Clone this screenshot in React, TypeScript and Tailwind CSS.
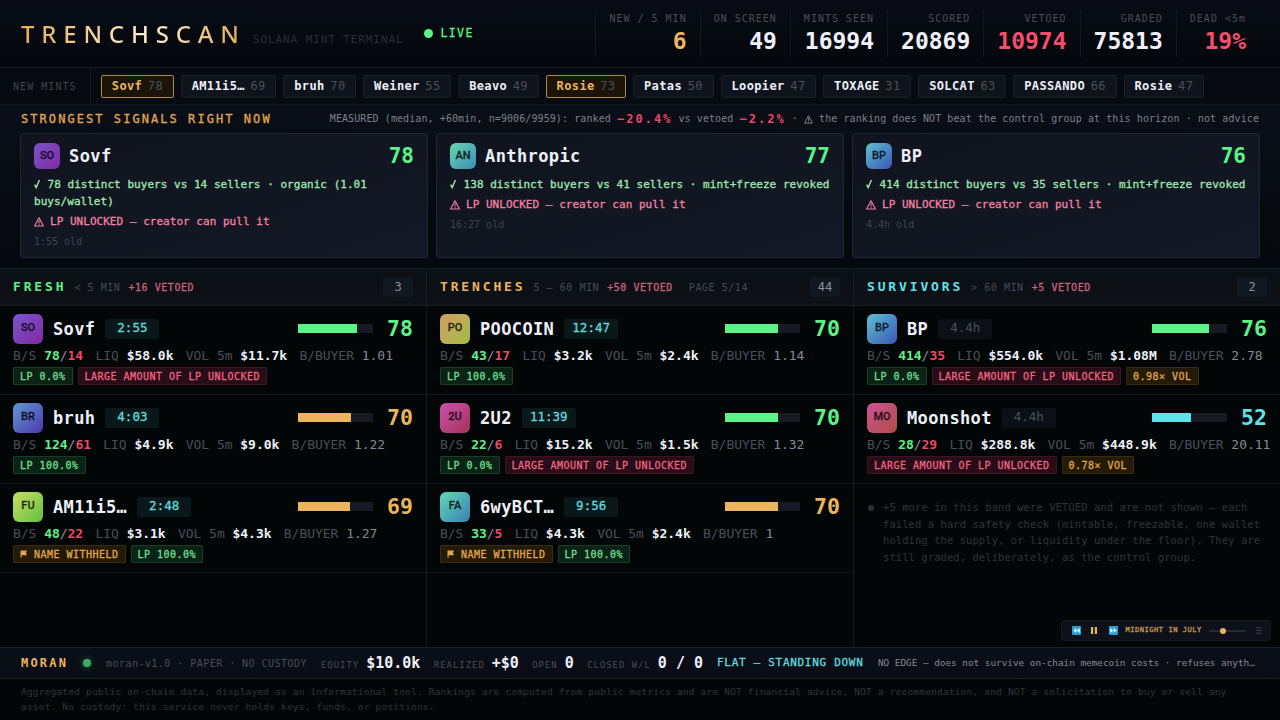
import React from "react";

type Tone = "green" | "gold" | "cyan" | "red";

const textTone: Record<Tone, string> = {
  green: "text-[#5cf287]",
  gold: "text-[#ecb45c]",
  cyan: "text-[#5fe3ea]",
  red: "text-[#f74d6c]",
};

const fillTone: Record<Tone, string> = {
  green: "bg-[#5cf287]",
  gold: "bg-[#ecb45c]",
  cyan: "bg-[#5fe3ea]",
  red: "bg-[#f74d6c]",
};

const tagTone: Record<Tone, string> = {
  green: "bg-[#0b2316] border-[#1a3d26] text-[#6ddf8e]",
  gold: "bg-[#241a08] border-[#3a2c0f] text-[#e0a64a]",
  red: "bg-[#270d17] border-[#3d1420] text-[#ee6480]",
  cyan: "bg-[#0c1a1c] border-[#17383c] text-[#5fe3ea]",
};

const medium = "[-webkit-text-stroke:0.3px_currentColor]";

const stats: { label: string; value: string; color: string }[] = [
  { label: "NEW / 5 MIN", value: "6", color: "text-[#ecb45c]" },
  { label: "ON SCREEN", value: "49", color: "text-[#eef0fa]" },
  { label: "MINTS SEEN", value: "16994", color: "text-[#eef0fa]" },
  { label: "SCORED", value: "20869", color: "text-[#eef0fa]" },
  { label: "VETOED", value: "10974", color: "text-[#f74d6c]" },
  { label: "GRADED", value: "75813", color: "text-[#eef0fa]" },
  { label: "DEAD <5m", value: "19%", color: "text-[#f74d6c]" },
];

const chips: { name: string; score: number; hot?: boolean }[] = [
  { name: "Sovf", score: 78, hot: true },
  { name: "AM11i5…", score: 69 },
  { name: "bruh", score: 70 },
  { name: "Weiner", score: 55 },
  { name: "Beavo", score: 49 },
  { name: "Rosie", score: 73, hot: true },
  { name: "Patas", score: 50 },
  { name: "Loopier", score: 47 },
  { name: "TOXAGE", score: 31 },
  { name: "SOLCAT", score: 63 },
  { name: "PASSANDO", score: 66 },
  { name: "Rosie", score: 47 },
];

const signals = [
  { code: "SO", name: "Sovf", score: 78, grad: "from-[#7a54cf] to-[#7d27a0]", good: "78 distinct buyers vs 14 sellers · organic (1.01 buys/wallet)", age: "1:55 old" },
  { code: "AN", name: "Anthropic", score: 77, grad: "from-[#66d9ad] to-[#3f8bb5]", good: "138 distinct buyers vs 41 sellers · mint+freeze revoked", age: "16:27 old" },
  { code: "BP", name: "BP", score: 76, grad: "from-[#62bfd0] to-[#3b56b4]", good: "414 distinct buyers vs 35 sellers · mint+freeze revoked", age: "4.4h old" },
];

type Tag = { text: string; tone: Tone; flag?: boolean };
type Mint = {
  code: string;
  name: string;
  grad: string;
  age: string;
  old?: boolean;
  score: number;
  tone: Tone;
  buys: string;
  sells: string;
  liq: string;
  vol: string;
  per: string;
  tags: Tag[];
};

const unlocked: Tag = { text: "LARGE AMOUNT OF LP UNLOCKED", tone: "red" };
const lp0: Tag = { text: "LP 0.0%", tone: "green" };
const lp100: Tag = { text: "LP 100.0%", tone: "green" };
const withheld: Tag = { text: "NAME WITHHELD", tone: "gold", flag: true };

const columns: { title: string; color: string; range: string; vetoed: string; page?: string; count: number; mints: Mint[] }[] = [
  {
    title: "FRESH",
    color: "text-[#5cf287]",
    range: "< 5 MIN",
    vetoed: "+16 VETOED",
    count: 3,
    mints: [
      { code: "SO", name: "Sovf", grad: "from-[#7a54cf] to-[#7d27a0]", age: "2:55", score: 78, tone: "green", buys: "78", sells: "14", liq: "$58.0k", vol: "$11.7k", per: "1.01", tags: [lp0, unlocked] },
      { code: "BR", name: "bruh", grad: "from-[#5f97d2] to-[#4a36ab]", age: "4:03", score: 70, tone: "gold", buys: "124", sells: "61", liq: "$4.9k", vol: "$9.0k", per: "1.22", tags: [lp100] },
      { code: "FU", name: "AM11i5…", grad: "from-[#c6df62] to-[#5fbf41]", age: "2:48", score: 69, tone: "gold", buys: "48", sells: "22", liq: "$3.1k", vol: "$4.3k", per: "1.27", tags: [withheld, lp100] },
    ],
  },
  {
    title: "TRENCHES",
    color: "text-[#ecb45c]",
    range: "5 – 60 MIN",
    vetoed: "+50 VETOED",
    page: "PAGE 5/14",
    count: 44,
    mints: [
      { code: "PO", name: "POOCOIN", grad: "from-[#d29c66] to-[#a2bc40]", age: "12:47", score: 70, tone: "green", buys: "43", sells: "17", liq: "$3.2k", vol: "$2.4k", per: "1.14", tags: [lp100] },
      { code: "2U", name: "2U2", grad: "from-[#cc4fae] to-[#a5325a]", age: "11:39", score: 70, tone: "green", buys: "22", sells: "6", liq: "$15.2k", vol: "$1.5k", per: "1.32", tags: [lp0, unlocked] },
      { code: "FA", name: "6wyBCT…", grad: "from-[#63d9b3] to-[#3b80b0]", age: "9:56", score: 70, tone: "gold", buys: "33", sells: "5", liq: "$4.3k", vol: "$2.4k", per: "1", tags: [withheld, lp100] },
    ],
  },
  {
    title: "SURVIVORS",
    color: "text-[#5fe3ea]",
    range: "> 60 MIN",
    vetoed: "+5 VETOED",
    count: 2,
    mints: [
      { code: "BP", name: "BP", grad: "from-[#62bfd0] to-[#3b56b4]", age: "4.4h", old: true, score: 76, tone: "green", buys: "414", sells: "35", liq: "$554.0k", vol: "$1.08M", per: "2.78", tags: [lp0, unlocked, { text: "0.98× VOL", tone: "gold" }] },
      { code: "MO", name: "Moonshot", grad: "from-[#cd5297] to-[#b14c43]", age: "4.4h", old: true, score: 52, tone: "cyan", buys: "28", sells: "29", liq: "$288.8k", vol: "$448.9k", per: "20.11", tags: [unlocked, { text: "0.78× VOL", tone: "gold" }] },
    ],
  },
];

function WarnIcon({ className }: { className: string }) {
  return (
    <svg viewBox="0 0 10 10" className={className} fill="none" stroke="currentColor" strokeWidth="1.1" strokeLinejoin="round">
      <path d="M5 0.8 L9.4 9 H0.6 Z" />
      <path d="M5 3.2 V6.4 M5 7.2 V8.2" />
    </svg>
  );
}

function CheckIcon() {
  return (
    <svg viewBox="0 0 7 10" className="mr-[6.6px] inline-block h-[10px] w-[7px] align-[-1px]" fill="none" stroke="currentColor" strokeWidth="1.4">
      <path d="M0.6 5.6 L2.2 8.6 L5.4 1" />
    </svg>
  );
}

function Avatar({ code, grad, size }: { code: string; grad: string; size: string }) {
  return (
    <div className={`flex shrink-0 items-center justify-center rounded-[6px] bg-linear-to-br text-[11px] font-medium text-black/75 ${grad} ${size}`}>
      <span className={`font-['Roboto',sans-serif] ${medium}`}>{code}</span>
    </div>
  );
}

function Header() {
  return (
    <header className="flex h-[68px] shrink-0 items-start border-b border-[#14181f] bg-linear-to-b from-[#090c16] to-[#04070b] pl-[21px] pr-[21px]">
      <h1 className="mt-[17px] w-[232px] bg-linear-to-r from-[#e5ab52] via-[#fbf0cf] via-55% to-[#e0a34a] bg-clip-text font-['Noto_Sans',sans-serif] text-[24px] leading-[34px] font-medium tracking-[6.8px] whitespace-nowrap text-transparent">
        TRENCHSCAN
      </h1>
      <span className="mt-[32px] text-[11px] leading-[16px] tracking-[0.9px] whitespace-nowrap text-[#292d35]">SOLANA MINT TERMINAL</span>
      <div className={`mt-[25px] ml-[21px] flex items-center gap-[7px] text-[11.5px] leading-[17px] tracking-[1.4px] text-[#5cf287] ${medium}`}>
        <i className="h-[9px] w-[9px] rounded-full bg-[#5cf287]" />
        LIVE
      </div>
      <div className="mt-[10px] ml-auto flex h-[47px]">
        {stats.map((s) => (
          <div key={s.label} className="flex flex-col items-end border-l border-[#12161d] px-[13px] whitespace-nowrap">
            <span className="mt-[1px] text-[10px] leading-[16px] tracking-[1px] text-[#4a4e59]">{s.label}</span>
            <span className={`text-[23px] leading-[28px] font-bold ${s.color}`}>{s.value}</span>
          </div>
        ))}
      </div>
    </header>
  );
}

function Ticker() {
  return (
    <div className="flex h-[37px] shrink-0 border-b border-[#14181f] bg-[#070a11]">
      <div className="flex w-[91px] items-center border-r border-[#151a21] pl-[13px] text-[10px] tracking-[1.05px] text-[#3f434d]">NEW MINTS</div>
      <div className="flex items-center gap-[7px] pl-[10px]">
        {chips.map((c, i) => (
          <div
            key={i}
            className={`flex h-[23px] items-center gap-[5.6px] rounded-[2px] border px-[9.8px] text-[12px] tracking-[0.38px] ${
              c.hot ? "border-[#b08a3e] bg-[#1a1508]" : "border-[#191f27] bg-[#0f141c]"
            }`}
          >
            <span className={`font-bold ${c.hot ? "text-[#ecb45c]" : "text-[#eef0fa]"}`}>{c.name}</span>
            <span className="text-[#4a4e59]">{c.score}</span>
          </div>
        ))}
      </div>
    </div>
  );
}

function Signals() {
  return (
    <section className="flex h-[163px] shrink-0 flex-col bg-linear-to-b from-[#0a0e17] to-[#05080c] px-[20px]">
      <div className="flex h-[28px] items-center pr-[1px] pl-[1px] whitespace-nowrap">
        <h2 className={`text-[12px] leading-[16px] tracking-[2.06px] text-[#e0a64e] ${medium}`}>STRONGEST SIGNALS RIGHT NOW</h2>
        <p className="ml-auto flex items-center text-[10px] leading-[16px] tracking-[0.09px] text-[#7d808b]">
          <span className="whitespace-pre">MEASURED (median, +60min, n=9006/9959): ranked </span>
          <b className="text-[12px] tracking-[2px] text-[#ea4867]">−20.4%</b>
          <span className="whitespace-pre">{" vs vetoed "}</span>
          <b className="text-[12px] tracking-[2px] text-[#ea4867]">−2.2%</b>
          <span className="whitespace-pre">{" · "}</span>
          <WarnIcon className="mr-[6px] h-[9px] w-[9px]" />
          <span>the ranking does NOT beat the control group at this horizon · not advice</span>
        </p>
      </div>
      <div className="grid grid-cols-3 gap-[8px]">
        {signals.map((s) => (
          <article key={s.name} className="flex h-[125px] flex-col rounded-[3px] border border-[#212530] bg-linear-to-br from-[#11141f] to-[#131824] px-[13px] pt-[9px]">
            <div className="flex h-[26px] items-center">
              <Avatar code={s.code} grad={s.grad} size="h-[26px] w-[26px]" />
              <span className="ml-[9px] text-[17px] leading-[24px] font-bold tracking-[0.4px] text-[#eef0fa]">{s.name}</span>
              <span className="ml-auto text-[21px] leading-[24px] font-bold text-[#5cf287]">{s.score}</span>
            </div>
            <p className={`mt-[7px] text-[11px] leading-[17px] tracking-[0.03px] text-[#9de9ad] ${medium}`}>
              <CheckIcon />
              {s.good}
            </p>
            <p className={`mt-[3px] flex items-center text-[11px] leading-[17px] tracking-[0.03px] text-[#f080a4] ${medium}`}>
              <WarnIcon className="mr-[6px] h-[10px] w-[10px]" />
              LP UNLOCKED — creator can pull it
            </p>
            <p className="mt-[4px] text-[10px] leading-[15px] text-[#3f434e]">{s.age}</p>
          </article>
        ))}
      </div>
    </section>
  );
}

function MintRow({ m }: { m: Mint }) {
  return (
    <div className="h-[89px] border-b border-[#11161a] px-[13px] pt-[8px]">
      <div className="flex h-[29px] items-center">
        <Avatar code={m.code} grad={m.grad} size="h-[30px] w-[30px]" />
        <span className="ml-[10px] text-[17px] leading-[24px] font-bold tracking-[0.36px] text-[#eef0fa]">{m.name}</span>
        <span
          className={`ml-[10px] flex h-[20px] w-[54px] items-center justify-center rounded-[2px] text-[12.5px] ${
            m.old ? "bg-[#0c1016] text-[#4a4e59]" : `bg-[#0b1819] text-[#5fd9df] ${medium}`
          }`}
        >
          {m.age}
        </span>
        <div className="ml-auto h-[9px] w-[75px] bg-[#171a25]">
          <div className={`h-full ${fillTone[m.tone]}`} style={{ width: `${m.score}%` }} />
        </div>
        <span className={`ml-[14px] text-[21.5px] leading-[24px] font-bold ${textTone[m.tone]}`}>{m.score}</span>
      </div>
      <div className="mt-[4px] flex gap-[12.3px] text-[13px] leading-[18px] tracking-[-0.03px] whitespace-nowrap text-[#4a4e59]">
        <span>
          B/S <b className="text-[#5cf287]">{m.buys}</b>
          <span className="text-[#8d909b]">/</span>
          <b className="text-[#ea4867]">{m.sells}</b>
        </span>
        <span>
          LIQ <b className="text-[#eef0fa]">{m.liq}</b>
        </span>
        <span>
          VOL 5m <b className="text-[#eef0fa]">{m.vol}</b>
        </span>
        <span>
          B/BUYER <span className="text-[#858894]">{m.per}</span>
        </span>
      </div>
      <div className="mt-[2px] flex gap-[5px]">
        {m.tags.map((t) => (
          <span key={t.text} className={`flex h-[18px] items-center rounded-[1px] border px-[6px] text-[10px] tracking-[0.48px] ${medium} ${tagTone[t.tone]}`}>
            {t.flag && (
              <svg viewBox="0 0 8 8" className="mr-[6px] h-[8px] w-[8px]" fill="currentColor">
                <path d="M0.5 0.5 H7 L5.9 2.8 L7 5.2 H1.6 V7.8 H0.5 Z" />
              </svg>
            )}
            {t.text}
          </span>
        ))}
      </div>
    </div>
  );
}

function Board() {
  return (
    <main className="grid h-[379px] shrink-0 grid-cols-[427px_427px_426px] border-t border-[#191d23]">
      {columns.map((c, i) => (
        <section key={c.title} className={i < 2 ? "border-r border-[#151a1e]" : ""}>
          <div className="flex h-[37px] items-center border-b border-[#181c23] bg-linear-to-b from-[#0b1015] to-[#0e1116] px-[13px] whitespace-nowrap">
            <h3 className={`text-[13px] font-bold tracking-[2.85px] ${c.color}`}>{c.title}</h3>
            <span className="ml-[8px] text-[10px] tracking-[0.55px] text-[#454954]">{c.range}</span>
            <span className={`ml-[8px] text-[10px] tracking-[0.55px] text-[#c9607c] ${medium}`}>{c.vetoed}</span>
            {c.page && <span className="ml-[16px] text-[10px] tracking-[0.55px] text-[#454954]">{c.page}</span>}
            <span className="ml-auto flex h-[20px] w-[30px] items-center justify-center rounded-[2px] bg-[#111820] text-[12px] text-[#8d909b]">{c.count}</span>
          </div>
          {c.mints.map((m) => (
            <MintRow key={m.name} m={m} />
          ))}
          {i === 2 && (
            <div className="flex pt-[15px] pl-[14px]">
              <i className="mt-[6px] mr-[9px] h-[6px] w-[6px] shrink-0 rounded-full bg-[#2c2f35]" />
              <p className="w-[384px] text-[10.5px] leading-[16.7px] tracking-[0.07px] text-[#2f3339]">
                +5 more in this band were VETOED and are not shown — each failed a hard safety check (mintable, freezable, one wallet holding the supply, or liquidity under the floor). They are still graded, deliberately, as the control group.
              </p>
            </div>
          )}
        </section>
      ))}
    </main>
  );
}

function SkipIcon({ back }: { back?: boolean }) {
  return (
    <svg viewBox="0 0 9 9" className="h-[9px] w-[9px]">
      <rect width="9" height="9" rx="1" fill="#2a9fd0" />
      <path d={back ? "M4.4 2 V7 L1.2 4.5 Z M7.8 2 V7 L4.6 4.5 Z" : "M4.6 2 V7 L7.8 4.5 Z M1.2 2 V7 L4.4 4.5 Z"} fill="#e6f6fd" />
    </svg>
  );
}

function Player() {
  return (
    <div className="absolute top-[620px] left-[1061px] flex h-[21px] w-[210px] items-center rounded-[4px] border border-[#161a23] bg-[#0e111a] pl-[10px]">
      <SkipIcon back />
      <svg viewBox="0 0 6 7" className="ml-[10px] h-[7px] w-[6px]" fill="#ecb45c">
        <path d="M0 0 H2.2 V7 H0 Z M3.8 0 H6 V7 H3.8 Z" />
      </svg>
      <div className="ml-[12px]">
        <SkipIcon />
      </div>
      <span className={`ml-[7.5px] w-[83px] text-[7px] tracking-[0.55px] whitespace-nowrap text-[#c99a4d] ${medium}`}>MIDNIGHT IN JULY</span>
      <div className="flex h-[2px] w-[37px] items-center rounded-full bg-[#262a33] pl-[11px]">
        <i className="h-[6px] w-[6px] rounded-full bg-[#ecb45c]" />
      </div>
      <svg viewBox="0 0 6 7" className="ml-[10px] h-[7px] w-[6px]" stroke="#3b3f48" strokeWidth="1">
        <path d="M0 0.8 H6 M0 3.5 H6 M0 6.2 H6" />
      </svg>
    </div>
  );
}

const ledger = [
  { label: "EQUITY", value: "$10.0k" },
  { label: "REALIZED", value: "+$0" },
  { label: "OPEN", value: "0" },
  { label: "CLOSED W/L", value: "0 / 0" },
];

function StatusBar() {
  return (
    <div className="flex h-[32px] shrink-0 items-center border-y border-[#1c2029] bg-linear-to-b from-[#0b0f18] to-[#090c15] pl-[21px] whitespace-nowrap">
      <span className="w-[62px] text-[12px] font-bold tracking-[2.2px] text-[#ecb45c]">MORAN</span>
      <i className="h-[8px] w-[8px] rounded-full bg-[#3fa866] shadow-[0_0_6px_#1f6a3c]" />
      <span className="ml-[15px] w-[215px] text-[10px] tracking-[0.46px] text-[#484c57]">moran-v1.0 · PAPER · NO CUSTODY</span>
      <div className="flex w-[396px] items-baseline gap-[13.4px]">
        {ledger.map((l) => (
          <span key={l.label} className="flex items-baseline gap-[7px]">
            <span className="text-[9px] tracking-[0.95px] text-[#484c57]">{l.label}</span>
            <b className="text-[15px] leading-[20px] text-[#eef0fa]">{l.value}</b>
          </span>
        ))}
      </div>
      <span className={`w-[161px] text-[11px] tracking-[0.7px] text-[#5fd9df] ${medium}`}>FLAT — STANDING DOWN</span>
      <span className="text-[9.4px] tracking-[-0.02px] text-[#858894]">NO EDGE — does not survive on-chain memecoin costs · refuses anyth…</span>
    </div>
  );
}

export default function App() {
  return (
    <div className="relative flex h-[720px] w-[1280px] flex-col overflow-hidden bg-[#030607] font-['DejaVu_Sans_Mono',monospace] antialiased">
      <Header />
      <Ticker />
      <Signals />
      <Board />
      <StatusBar />
      <footer className="px-[21px] pt-[5px] text-[9.5px] leading-[15px] tracking-[0.19px] text-[#30343b]">
        Aggregated public on-chain data, displayed as an informational tool. Rankings are computed from public metrics and are NOT financial advice, NOT a recommendation, and NOT a solicitation to buy or sell any asset. No custody: this service never holds keys, funds, or positions.
      </footer>
      <Player />
    </div>
  );
}
